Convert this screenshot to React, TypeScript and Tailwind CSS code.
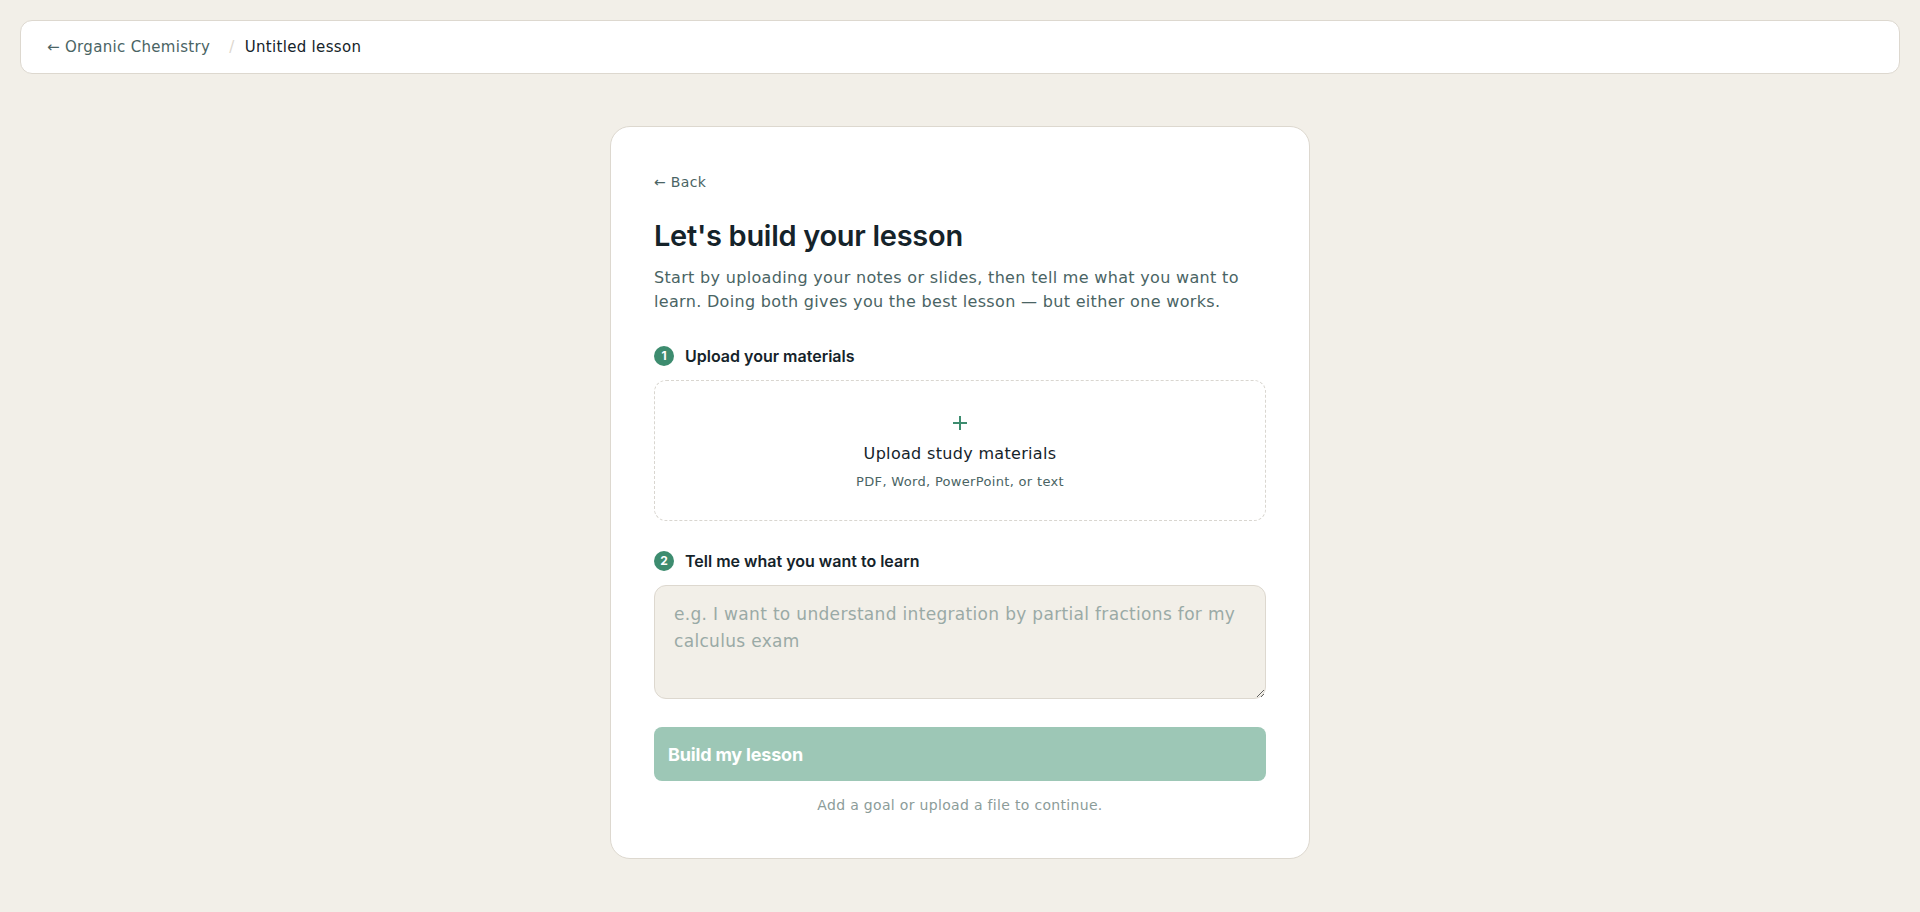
import React, { useState } from "react";

const App = () => {
  const [goal, setGoal] = useState("");

  return (
    <div className="min-h-screen bg-[#f2efe8] px-5 pt-5 pb-12 font-['DejaVu_Sans',sans-serif] tracking-[0.02em] text-[#1c2b2b]">
      <header className="flex h-[54px] items-center rounded-xl border border-[#ddd8cf] bg-white px-[26px] text-[15px]">
        <a href="#" className="text-[#4a6464]">
          ← Organic Chemistry
        </a>
        <span className="ml-[19px] mr-[10px] text-[#ddd7ce]">/</span>
        <span className="text-[#15232a]">Untitled lesson</span>
      </header>

      <main className="mt-[52px] flex justify-center">
        <div className="w-[700px] rounded-[20px] border border-[#ddd8cf] bg-white p-[43px]">
          <a href="#" className="text-[14px] leading-[22px] text-[#4a6464]">
            ← Back
          </a>

          <h1 className="mt-[24px] font-['Inter',sans-serif] text-[29px] font-semibold leading-[36px] tracking-[-0.01em] text-[#15232a]">
            Let's build your lesson
          </h1>
          <p className="mt-[12px] text-[16px] leading-[24px] text-[#4a6464]">
            Start by uploading your notes or slides, then tell me what you want to learn. Doing both gives you the best
            lesson — but either one works.
          </p>

          <div className="mt-[32px] flex items-center gap-[11px] font-['Inter',sans-serif] tracking-normal">
            <span className="flex h-5 w-5 items-center justify-center rounded-full bg-[#3d8c6f] text-[12px] font-bold text-white">
              1
            </span>
            <span className="text-[16px] font-semibold leading-5 text-[#15232a]">Upload your materials</span>
          </div>

          <button
            type="button"
            className="mt-[14px] flex h-[141px] w-full flex-col items-center justify-center rounded-xl border border-dashed border-[#d9d6d0] bg-white pt-[6px]"
          >
            <svg width="14" height="14" viewBox="0 0 14 14" className="mb-[13px]">
              <path d="M7 0v14M0 7h14" stroke="#3d8c6f" strokeWidth="2" />
            </svg>
            <span className="text-[16px] leading-[22px] text-[#15232a]">Upload study materials</span>
            <span className="mt-[8px] text-[13px] leading-[18px] text-[#4a6464]">PDF, Word, PowerPoint, or text</span>
          </button>

          <div className="mt-[30px] flex items-center gap-[11px] font-['Inter',sans-serif] tracking-normal">
            <span className="flex h-5 w-5 items-center justify-center rounded-full bg-[#3d8c6f] text-[12px] font-bold text-white">
              2
            </span>
            <span className="text-[16px] font-semibold leading-5 text-[#15232a]">Tell me what you want to learn</span>
          </div>

          <textarea
            value={goal}
            onChange={(e) => setGoal(e.target.value)}
            placeholder="e.g. I want to understand integration by partial fractions for my calculus exam"
            className="mt-[14px] block h-[114px] w-full rounded-xl border border-[#ddd8cf] bg-[#f2efe8] px-[19px] pt-[15px] pb-[10px] text-[17px] leading-[27px] text-[#15232a] outline-none placeholder:text-[#9aaaa6]"
          />

          <button
            type="button"
            disabled
            className="mt-[28px] flex h-[54px] w-full items-center rounded-lg bg-[#9dc7b6] px-[14px] font-['Inter',sans-serif] text-[18px] font-bold tracking-[-0.01em] text-white"
          >
            Build my lesson
          </button>
          <p className="mt-[14px] text-center text-[14px] leading-[20px] text-[#8c9c99]">
            Add a goal or upload a file to continue.
          </p>
        </div>
      </main>
    </div>
  );
};

export default App;
